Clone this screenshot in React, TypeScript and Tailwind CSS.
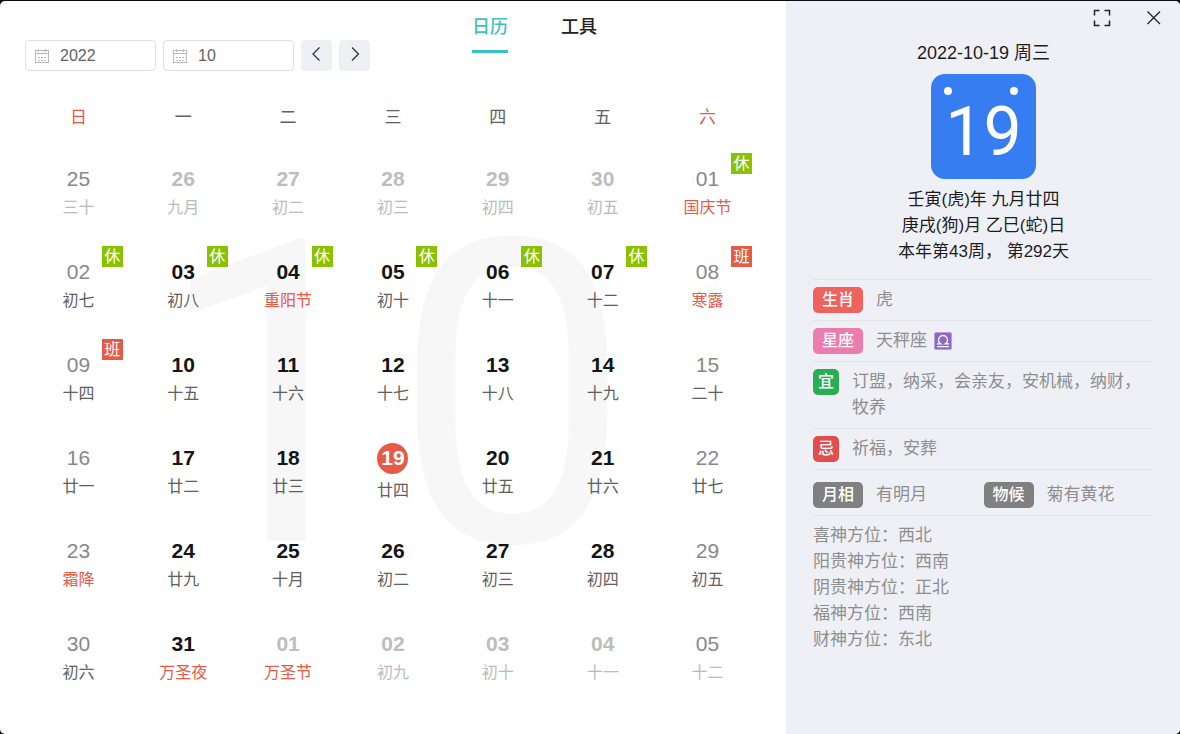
import { useState, type ReactNode } from "react";

type Badge = "休" | "班";
// Day number, lunar label, and optionally: h = festival or solar term, o = other month
type Day = { n: string; l: string; h?: boolean; o?: boolean; b?: Badge };

const weekdays = ["日", "一", "二", "三", "四", "五", "六"];

const weeks: Day[][] = [
  [
    { n: "25", l: "三十", o: true },
    { n: "26", l: "九月", o: true },
    { n: "27", l: "初二", o: true },
    { n: "28", l: "初三", o: true },
    { n: "29", l: "初四", o: true },
    { n: "30", l: "初五", o: true },
    { n: "01", l: "国庆节", h: true, b: "休" },
  ],
  [
    { n: "02", l: "初七", b: "休" },
    { n: "03", l: "初八", b: "休" },
    { n: "04", l: "重阳节", h: true, b: "休" },
    { n: "05", l: "初十", b: "休" },
    { n: "06", l: "十一", b: "休" },
    { n: "07", l: "十二", b: "休" },
    { n: "08", l: "寒露", h: true, b: "班" },
  ],
  [
    { n: "09", l: "十四", b: "班" },
    { n: "10", l: "十五" },
    { n: "11", l: "十六" },
    { n: "12", l: "十七" },
    { n: "13", l: "十八" },
    { n: "14", l: "十九" },
    { n: "15", l: "二十" },
  ],
  [
    { n: "16", l: "廿一" },
    { n: "17", l: "廿二" },
    { n: "18", l: "廿三" },
    { n: "19", l: "廿四" },
    { n: "20", l: "廿五" },
    { n: "21", l: "廿六" },
    { n: "22", l: "廿七" },
  ],
  [
    { n: "23", l: "霜降", h: true },
    { n: "24", l: "廿九" },
    { n: "25", l: "十月" },
    { n: "26", l: "初二" },
    { n: "27", l: "初三" },
    { n: "28", l: "初四" },
    { n: "29", l: "初五" },
  ],
  [
    { n: "30", l: "初六" },
    { n: "31", l: "万圣夜", h: true },
    { n: "01", l: "万圣节", h: true, o: true },
    { n: "02", l: "初九", o: true },
    { n: "03", l: "初十", o: true },
    { n: "04", l: "十一", o: true },
    { n: "05", l: "十二", o: true },
  ],
];

const directions = [
  "喜神方位：西北",
  "阳贵神方位：西南",
  "阴贵神方位：正北",
  "福神方位：西南",
  "财神方位：东北",
];

function CalendarIcon() {
  return (
    <svg
      className="size-[14px] shrink-0 text-[#b9b9b9]"
      viewBox="0 0 14 14"
      fill="none"
      stroke="currentColor"
      shapeRendering="crispEdges"
      aria-hidden="true"
    >
      <path d="M.5 1.5h13v12H.5zM.5 4.5h13M3.5 0v3M10.5 0v3" />
      <path d="M3 8.5h2M6 8.5h2M9 8.5h2M3 11.5h2M6 11.5h2M9 11.5h2" />
    </svg>
  );
}

function PickerField({ label, value, onChange }: { label: string; value: string; onChange: (v: string) => void }) {
  return (
    <label className="flex h-[31px] w-[131px] items-center gap-[11px] rounded border border-[#dcdfe6] bg-white pl-[9px]">
      <CalendarIcon />
      <input
        className="w-full min-w-0 bg-transparent text-base leading-6 text-[#606266] outline-none"
        aria-label={label}
        value={value}
        onChange={(e) => onChange(e.target.value)}
      />
    </label>
  );
}

function StepButton({ label, d }: { label: string; d: string }) {
  return (
    <button
      type="button"
      aria-label={label}
      className="flex size-[31px] items-center justify-center rounded bg-[#eff0f5] pb-1 text-[#333]"
    >
      <svg className="size-4" viewBox="0 0 16 16" fill="none" stroke="currentColor" strokeWidth="1.3" aria-hidden="true">
        <path d={d} />
      </svg>
    </button>
  );
}

function DayCell({ day, column, today }: { day: Day; column: number; today: boolean }) {
  const weekend = column === 0 || column === 6;
  const numberStyle = today
    ? "font-bold text-white"
    : weekend
      ? "text-[#888]"
      : day.o
        ? "font-bold text-[#bdbdbd]"
        : "font-bold text-[#151515]";
  const lunarStyle = day.h ? "text-[#e85a46]" : day.o ? "text-[#bbb]" : "text-[#606060]";
  return (
    <td className="h-[93px] p-0 align-top">
      <button type="button" className="relative flex w-full flex-col items-center pt-[10px]">
        <span className={`flex h-8 items-center text-[21px] leading-6 ${numberStyle}`}>
          {today ? (
            <span className="flex size-[31px] items-center justify-center rounded-full bg-[#e65a46]">{day.n}</span>
          ) : (
            day.n
          )}
        </span>
        <span className={`text-base leading-[26px] ${lunarStyle} ${today ? "mt-1" : ""}`}>{day.l}</span>
        {day.b && (
          <span
            className={`absolute top-0 right-2 size-[21px] text-center text-base leading-[21px] text-white ${
              day.b === "休" ? "bg-[#8ac103]" : "bg-[#e65a46]"
            }`}
          >
            {day.b}
          </span>
        )}
      </button>
    </td>
  );
}

function Tag({ color, small, children }: { color: string; small?: boolean; children: ReactNode }) {
  return (
    <span
      className={`h-[26px] shrink-0 rounded-[5px] text-center text-base leading-[25px] font-medium text-white ${color} ${
        small ? "w-[26px]" : "w-[50px]"
      }`}
    >
      {children}
    </span>
  );
}

function InfoRow({ children }: { children: ReactNode }) {
  return <div className="flex gap-[13px] border-t border-[#e2e3e7] py-[7px]">{children}</div>;
}

function LibraIcon() {
  return (
    <svg className="size-[18px]" viewBox="0 0 18 18" fill="none" role="img" aria-label="天秤座符号">
      <rect x=".5" y=".5" width="17" height="17" rx="1.5" fill="#8f66c9" stroke="#b79ede" />
      <path d="M3 11.800h3.600A4.500 4.500 0 1 1 11.400 11.800H15M3 14.700h12" stroke="#fff" strokeWidth="1.3" />
    </svg>
  );
}

export default function App() {
  const [year, setYear] = useState("2022");
  const [month, setMonth] = useState("10");

  return (
    <div
      lang="zh-CN"
      className="min-h-screen bg-[#0d0b12] pt-px font-['Liberation_Sans','Noto_Sans_CJK_SC',sans-serif]"
    >
      <main className="grid min-h-[calc(100vh-1px)] grid-cols-[1fr_394px] overflow-hidden rounded-[5px] bg-white">
        <section>
          <header className="flex items-start pl-[25px]">
            <div className="flex gap-[7px] pt-[39px]">
              <PickerField label="年份" value={year} onChange={setYear} />
              <PickerField label="月份" value={month} onChange={setMonth} />
              <StepButton label="上个月" d="M10.5 1.5 4 8l6.500 6.500" />
              <StepButton label="下个月" d="M5 1.500 11.500 8 5 14.500" />
            </div>
            <nav className="flex gap-[53px] pl-[102px] text-lg leading-6 font-medium">
              <a href="#calendar" className="border-b-[3px] border-[#34c3c7] pt-[14px] pb-[11px] text-[#3fc1c4]">
                日历
              </a>
              <a href="#tools" className="pt-[14px] pb-[11px] text-[#222]">
                工具
              </a>
            </nav>
          </header>

          <div className="relative mt-[11px] px-[26px]">
            <div
              aria-hidden="true"
              className="pointer-events-none absolute inset-0 flex items-center justify-center font-[Roboto,sans-serif] text-[424px] leading-none text-[#f7f7f7]"
            >
              {month}
            </div>
            <table className="relative w-full table-fixed border-collapse">
              <thead>
                <tr className="h-[71px]">
                  {weekdays.map((name, i) => (
                    <th
                      key={name}
                      scope="col"
                      className={`p-0 text-[17px] leading-6 font-normal ${
                        i === 0 || i === 6 ? "text-[#e85a46]" : "text-[#606060]"
                      }`}
                    >
                      {name}
                    </th>
                  ))}
                </tr>
              </thead>
              <tbody>
                {weeks.map((week, row) => (
                  <tr key={row}>
                    {week.map((day, column) => (
                      <DayCell key={column} day={day} column={column} today={row === 3 && column === 3} />
                    ))}
                  </tr>
                ))}
              </tbody>
            </table>
          </div>
        </section>

        <aside className="bg-[#eff0f5] pr-[26px] pl-[27px] text-[17px] leading-[26px] text-[#8e8e8e]">
          <div className="flex h-[39px] items-start justify-end gap-[34px] pt-2 text-[#222]">
            <button type="button" aria-label="全屏">
              <svg className="size-[18px]" viewBox="0 0 18 18" fill="none" stroke="currentColor" strokeWidth="1.5" aria-hidden="true">
                <path d="M1.500 6.500v-5h5M11.500 1.500h5v5M16.500 11.500v5h-5M6.500 16.500h-5v-5" />
              </svg>
            </button>
            <button type="button" aria-label="关闭" className="-mr-[9px]">
              <svg className="size-[18px]" viewBox="0 0 18 18" fill="none" stroke="currentColor" strokeWidth="1.3" aria-hidden="true">
                <path d="m2.500 2.500 12.500 12.500M15 2.500 2.500 15" />
              </svg>
            </button>
          </div>

          <div className="flex flex-col items-center pb-[14px] text-[#1c1c1c]">
            <h1 className="text-lg leading-[26px]">2022-10-19 周三</h1>
            <div className="my-2 flex size-[105px] flex-col rounded-[14px] bg-[#367df1] pt-[13px] text-white">
              <div className="flex justify-between pr-[18px] pl-[13px]">
                <span className="size-2 rounded-full bg-white" />
                <span className="size-2 rounded-full bg-white" />
              </div>
              <p className="pt-[3px] text-center font-[Roboto,sans-serif] text-[68px] leading-[68px]">19</p>
            </div>
            <p>壬寅(虎)年 九月廿四</p>
            <p>庚戌(狗)月 乙巳(蛇)日</p>
            <p>本年第43周， 第292天</p>
          </div>

          <InfoRow>
            <Tag color="bg-[#ef635f]">生肖</Tag>
            <p>虎</p>
          </InfoRow>
          <InfoRow>
            <Tag color="bg-[#ec7cae]">星座</Tag>
            <p className="flex items-center gap-[7px]">
              天秤座
              <LibraIcon />
            </p>
          </InfoRow>
          <InfoRow>
            <Tag color="bg-[#2aae55]" small>
              宜
            </Tag>
            <p>订盟，纳采，会亲友，安机械，纳财，牧养</p>
          </InfoRow>
          <InfoRow>
            <Tag color="bg-[#e24e4d]" small>
              忌
            </Tag>
            <p>祈福，安葬</p>
          </InfoRow>
          <div className="grid grid-cols-2 border-y border-[#e2e3e7] pt-3 pb-[7px]">
            <div className="flex gap-[13px]">
              <Tag color="bg-[#808080]">月相</Tag>
              <p>有明月</p>
            </div>
            <div className="flex gap-[13px]">
              <Tag color="bg-[#808080]">物候</Tag>
              <p>菊有黄花</p>
            </div>
          </div>
          <ul className="pt-[7px]">
            {directions.map((text) => (
              <li key={text}>{text}</li>
            ))}
          </ul>
        </aside>
      </main>
    </div>
  );
}
